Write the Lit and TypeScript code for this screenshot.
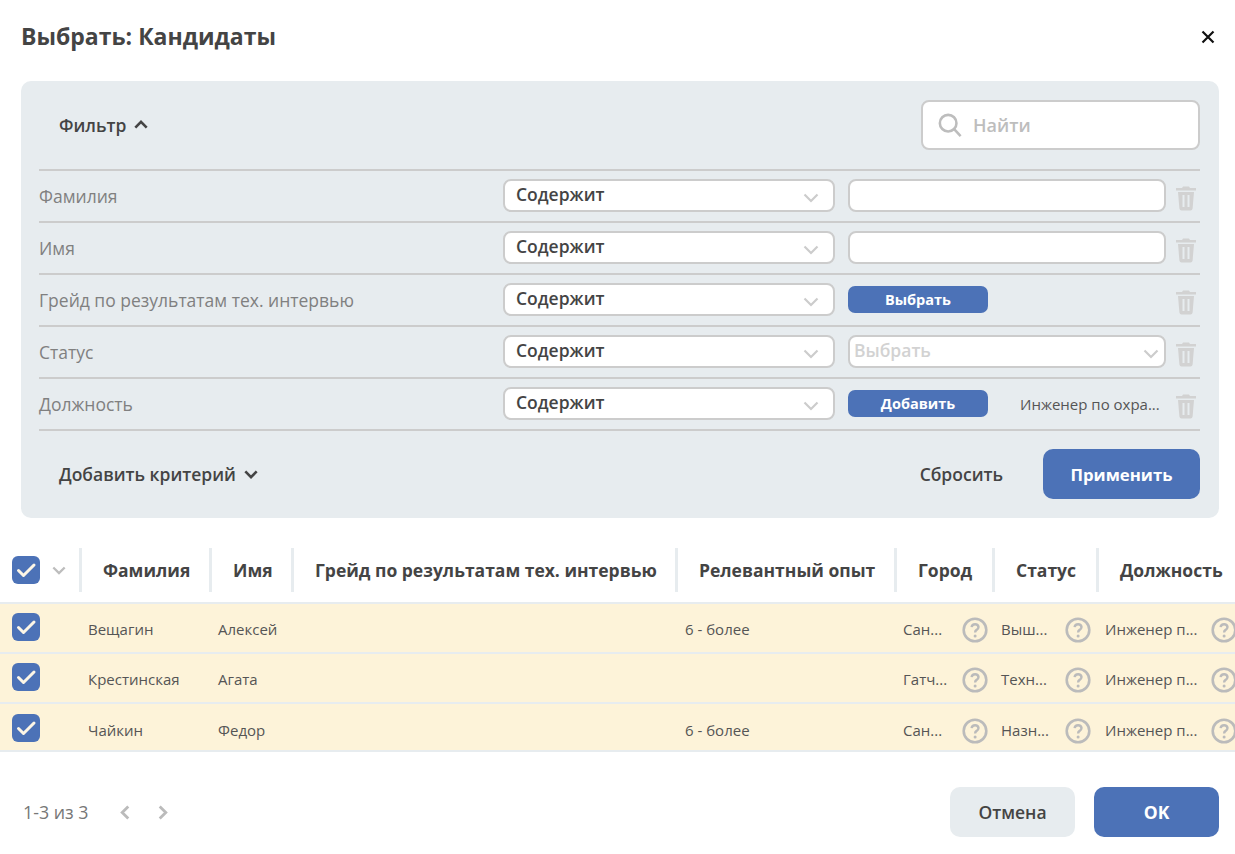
import { LitElement, html, css, svg } from "lit";
import { customElement } from "lit/decorators.js";

const chevronDown = html`<svg class="chev" viewBox="0 0 16 10"><path d="M1.5 1.5 8 8l6.500-6.500" /></svg>`;
const chevronUp = html`<svg class="chev" viewBox="0 0 16 10"><path d="M1.500 8.500 8 2l6.500 6.500" /></svg>`;

const trash = html`<svg class="trash" viewBox="0 0 20 26">
  <path d="M7 1.500h6l1 1.500h6v2.500H0V3h6z" />
  <path fill-rule="evenodd" d="M2 7h16l-1.400 16.500q-.2 2-2.100 2H5.500q-1.900 0-2.100-2zM6.500 10v12h2V10zM11.500 10v12h2V10z" />
</svg>`;

const check = svg`<path d="M6.500 14.500l5 5L22 9" fill="none" stroke="#fdf6e6" stroke-width="3" stroke-linecap="round" stroke-linejoin="round" />`;
const checkbox = html`<svg class="checkbox" viewBox="0 0 28 28"><rect width="28" height="28" rx="6" fill="#4c72b7" />${check}</svg>`;

const help = html`<svg class="help" viewBox="0 0 26 26">
  <circle cx="13" cy="13" r="11.300" fill="none" stroke="#bbbbbb" stroke-width="2.600" />
  <path d="M9.600 10.200q.4-3 3.500-3t3.400 2.800q0 1.700-1.900 2.900-1.500.9-1.500 2.600" fill="none" stroke="#bbbbbb" stroke-width="2.400" />
  <circle cx="13.100" cy="19" r="1.500" fill="#bbbbbb" />
</svg>`;

type Filter = { label: string; kind: "input" | "pick" | "select" | "add" };

const filters: Filter[] = [
  { label: "Фамилия", kind: "input" },
  { label: "Имя", kind: "input" },
  { label: "Грейд по результатам тех. интервью", kind: "pick" },
  { label: "Статус", kind: "select" },
  { label: "Должность", kind: "add" },
];

const columns = [
  "Фамилия",
  "Имя",
  "Грейд по результатам тех. интервью",
  "Релевантный опыт",
  "Город",
  "Статус",
  "Должность",
];

const rows = [
  { last: "Вещагин", first: "Алексей", exp: "6 - более", city: "Сан...", status: "Выш...", job: "Инженер п..." },
  { last: "Крестинская", first: "Агата", exp: "", city: "Гатч...", status: "Техн...", job: "Инженер п..." },
  { last: "Чайкин", first: "Федор", exp: "6 - более", city: "Сан...", status: "Назн...", job: "Инженер п..." },
];

@customElement("app-root")
export class AppRoot extends LitElement {
  static styles = css`
    :host {
      display: block;
      height: 854px;
      overflow: hidden;
      background: #fff;
      font-family: "Open Sans", sans-serif;
      color: #444;
    }

    .chev {
      width: 14px;
      height: 9px;
      fill: none;
      stroke: currentColor;
      stroke-width: 2.500;
    }

    .title-bar {
      display: flex;
      justify-content: space-between;
      align-items: center;
      height: 74px;
      padding: 0 20px 0 21px;
    }

    h1 {
      margin: 0 0 2px;
      font-size: 23px;
      line-height: 30px;
      font-weight: 700;
      color: #444;
    }

    .close {
      width: 14px;
      height: 14px;
      stroke: #111;
      stroke-width: 2.200;
    }

    .panel {
      margin: 7px 16px 0 21px;
      height: 437px;
      box-sizing: border-box;
      padding: 0 19px 0 18px;
      background: #e7ecef;
      border-radius: 10px;
    }

    .panel-head {
      display: flex;
      justify-content: space-between;
      align-items: center;
      height: 88px;
      padding: 0 0 0 20px;
    }

    .toggle {
      display: flex;
      align-items: center;
      gap: 8px;
      font-size: 17.500px;
      font-weight: 600;
      color: #444;
    }

    .panel-head .toggle {
      margin-top: -1px;
    }

    .toggle .chev {
      color: #444;
      stroke-width: 3;
    }

    .search {
      display: flex;
      align-items: center;
      gap: 11px;
      width: 279px;
      height: 50px;
      box-sizing: border-box;
      padding-left: 15px;
      background: #fff;
      border: 2px solid #ccc;
      border-radius: 8px;
      font-size: 18px;
      font-weight: 600;
      color: #bdbdbd;
    }

    .search svg {
      width: 24px;
      height: 24px;
      fill: none;
      stroke: #bdbdbd;
      stroke-width: 2.800;
    }

    .filter {
      display: grid;
      grid-template-columns: 464px 332px 331px 1fr;
      align-items: start;
      height: 52px;
      box-sizing: border-box;
      border-top: 2px solid #ccc;
    }

    .filter-label {
      align-self: center;
      font-size: 17.500px;
      color: #808080;
    }

    .box {
      display: flex;
      align-items: center;
      justify-content: space-between;
      height: 33px;
      box-sizing: border-box;
      margin-top: 8px;
      padding-bottom: 4px;
      background: #fff;
      border: 2px solid #ccc;
      border-radius: 8px;
      font-size: 17.500px;
      font-weight: 600;
    }

    .op {
      padding-left: 11px;
      padding-right: 14px;
      color: #444;
    }

    .op .chev,
    .value .chev {
      width: 16px;
      height: 10px;
      margin-top: 8px;
      color: #ccc;
      stroke-width: 2.200;
    }

    .value {
      margin-left: 13px;
      padding-left: 4px;
      padding-right: 5px;
      color: #d2d2d2;
    }

    .value-cell {
      display: flex;
      align-items: center;
      margin: 8px 0 0 13px;
      height: 33px;
    }

    .small-btn {
      width: 140px;
      height: 27px;
      flex: none;
      display: flex;
      align-items: center;
      justify-content: center;
      background: #4c72b7;
      border-radius: 7px;
      color: #fff;
      font-size: 14.500px;
      font-weight: 700;
    }

    .picked {
      margin-left: 32px;
      font-size: 15px;
      color: #555;
      white-space: nowrap;
    }

    .trash {
      width: 20px;
      height: 26px;
      margin: 14px 0 0 10px;
      fill: #d2d2d2;
    }

    .panel-foot {
      display: flex;
      align-items: center;
      justify-content: space-between;
      height: 86px;
      border-top: 2px solid #ccc;
      box-sizing: border-box;
      padding: 2px 0 0 20px;
    }

    .foot-right {
      display: flex;
      align-items: center;
      gap: 40px;
      font-size: 17.500px;
      font-weight: 600;
      color: #444;
    }

    .apply {
      display: flex;
      align-items: center;
      justify-content: center;
      width: 157px;
      height: 50px;
      background: #4c72b7;
      border-radius: 10px;
      color: #fff;
      font-size: 16.800px;
      font-weight: 700;
    }

    .table {
      margin-top: 22px;
      width: 1241px;
    }

    .grid {
      display: grid;
      grid-template-columns: 79px 130px 82px 384px 219px 98px 104px 146px;
    }

    .thead {
      height: 64px;
      box-sizing: border-box;
      padding-bottom: 2px;
      align-items: center;
      border-bottom: 2px solid #e7ecef;
    }

    .th {
      height: 44px;
      display: flex;
      align-items: center;
      padding-left: 21px;
      border-left: 3px solid #e7ecef;
      font-size: 17.500px;
      font-weight: 700;
      color: #444;
      white-space: nowrap;
    }

    .check-head {
      display: flex;
      align-items: center;
      gap: 12px;
      padding-left: 12px;
    }

    .check-head .chev {
      color: #bdbdbd;
      stroke-width: 2.600;
    }

    .checkbox {
      width: 28px;
      height: 28px;
      display: block;
    }

    .tr {
      height: 50px;
      box-sizing: border-box;
      background: #fdf3d9;
      border-bottom: 2px solid #e7ecef;
      padding-top: 9px;
      font-size: 15px;
      color: #555;
    }

    .tr.tail {
      height: 48px;
      padding-top: 10px;
    }

    .check-cell {
      padding-left: 12px;
    }

    .td {
      padding: 7px 0 0 9px;
      line-height: 19px;
      white-space: nowrap;
    }

    .td:nth-child(5) {
      padding-left: 10px;
    }

    .td-help {
      display: flex;
      align-items: flex-start;
      justify-content: space-between;
      padding: 7px 5px 0 9px;
      min-width: 0;
    }

    .td-help:nth-child(6) {
      padding-right: 4px;
    }

    .td-help span {
      line-height: 19px;
      white-space: nowrap;
    }

    .help {
      flex: none;
      width: 26px;
      height: 26px;
      margin-top: -3px;
    }

    .footer {
      display: flex;
      align-items: center;
      justify-content: space-between;
      margin-top: 35px;
      padding: 0 16px 0 23px;
    }

    .pager {
      display: flex;
      align-items: center;
      font-size: 17.800px;
      color: #777;
    }

    .pager svg {
      width: 10px;
      height: 15px;
      fill: none;
      stroke: #bbb;
      stroke-width: 3;
    }

    .pager svg.prev {
      margin-left: 32px;
    }

    .pager svg.next {
      margin-left: 28px;
    }

    .actions {
      display: flex;
      gap: 19px;
    }

    .action {
      display: flex;
      align-items: center;
      justify-content: center;
      width: 125px;
      height: 50px;
      border-radius: 10px;
      font-size: 17.500px;
      font-weight: 600;
    }

    .cancel {
      background: #e7ecef;
      color: #444;
    }

    .ok {
      background: #4c72b7;
      color: #fff;
      font-weight: 700;
    }
  `;

  renderValue(f: Filter) {
    if (f.kind === "input") return html`<div class="box value"></div>`;
    if (f.kind === "select") return html`<div class="box value">Выбрать ${chevronDown}</div>`;
    if (f.kind === "pick") return html`<div class="value-cell"><div class="small-btn">Выбрать</div></div>`;
    return html`<div class="value-cell">
      <div class="small-btn">Добавить</div>
      <div class="picked">Инженер по охра...</div>
    </div>`;
  }

  render() {
    return html`
      <div class="title-bar">
        <h1>Выбрать: Кандидаты</h1>
        <svg class="close" viewBox="0 0 14 14"><path d="M1.500 1.500l11 11M12.500 1.500l-11 11" /></svg>
      </div>

      <div class="panel">
        <div class="panel-head">
          <div class="toggle">Фильтр ${chevronUp}</div>
          <div class="search">
            <svg viewBox="0 0 26 26"><circle cx="11" cy="11" r="9" /><path d="M17.500 17.500l7 7.500" /></svg>
            Найти
          </div>
        </div>
        ${filters.map(
          (f) => html`<div class="filter">
            <div class="filter-label">${f.label}</div>
            <div class="box op">Содержит ${chevronDown}</div>
            ${this.renderValue(f)} ${trash}
          </div>`
        )}
        <div class="panel-foot">
          <div class="toggle">Добавить критерий ${chevronDown}</div>
          <div class="foot-right">
            <span>Сбросить</span>
            <div class="apply">Применить</div>
          </div>
        </div>
      </div>

      <div class="table">
        <div class="grid thead">
          <div class="check-head">${checkbox} ${chevronDown}</div>
          ${columns.map((c) => html`<div class="th">${c}</div>`)}
        </div>
        ${rows.map(
          (r, i) => html`<div class="grid tr ${i === 2 ? "tail" : ""}">
            <div class="check-cell">${checkbox}</div>
            <div class="td">${r.last}</div>
            <div class="td">${r.first}</div>
            <div class="td"></div>
            <div class="td">${r.exp}</div>
            <div class="td-help"><span>${r.city}</span>${help}</div>
            <div class="td-help"><span>${r.status}</span>${help}</div>
            <div class="td-help"><span>${r.job}</span>${help}</div>
          </div>`
        )}
      </div>

      <div class="footer">
        <div class="pager">
          1-3 из 3
          <svg class="prev" viewBox="0 0 10 16"><path d="M8.500 1.500 2 8l6.500 6.500" /></svg>
          <svg class="next" viewBox="0 0 10 16"><path d="M1.500 1.500 8 8l-6.500 6.500" /></svg>
        </div>
        <div class="actions">
          <div class="action cancel">Отмена</div>
          <div class="action ok">OK</div>
        </div>
      </div>
    `;
  }
}
